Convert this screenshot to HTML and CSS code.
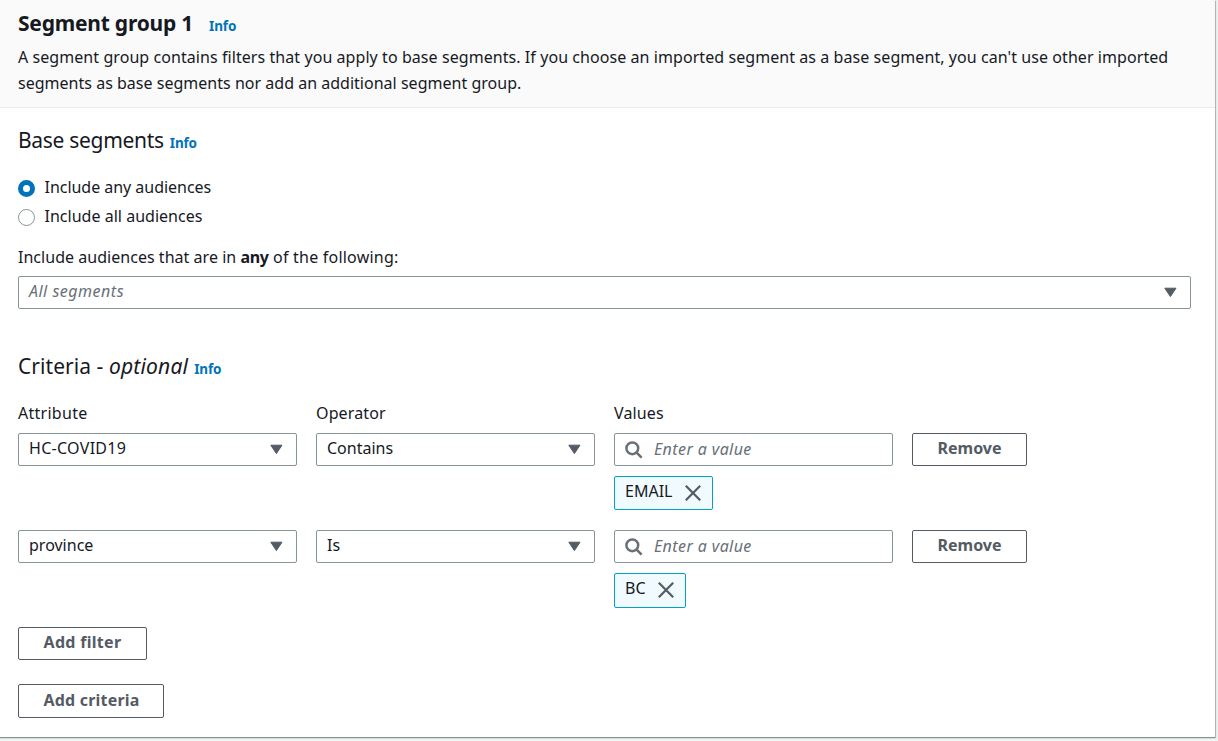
FILE: index.html
```html
<!DOCTYPE html>
<html lang="en">
<head>
<meta charset="utf-8">
<title>Segment group 1</title>
<link rel="stylesheet" href="styles.css">
</head>
<body>
<svg class="defs" width="0" height="0" aria-hidden="true">
  <symbol id="caret" viewBox="0 0 14 11"><path d="M1.8 1.2h11.2L7.4 9.6z" fill="#545b64" stroke="#545b64" stroke-width="1" stroke-linejoin="round"/></symbol>
  <symbol id="search" viewBox="0 0 18 18"><circle cx="7.3" cy="7.3" r="5.9" fill="none" stroke="#687078" stroke-width="2.5"/><path d="M11.6 11.6l5 5" stroke="#687078" stroke-width="2.5"/></symbol>
  <symbol id="close" viewBox="0 0 16 16"><path d="M.8.8l14.4 14.4M15.2.8L.8 15.2" stroke="#545b64" stroke-width="2.2"/></symbol>
</svg>
<main class="panel">
  <header class="panel-header">
    <div class="title-row"><h2 class="title">Segment group 1</h2><a class="info">Info</a></div>
    <p class="description"><span class="line-one">A segment group contains filters that you apply to base segments. If you choose an imported segment as a base segment, you can't use other imported</span> <span class="line-two">segments as base segments nor add an additional segment group.</span></p>
  </header>
  <div class="panel-body">
    <div class="section-row"><h3 class="section-title base-title">Base segments</h3><a class="info">Info</a></div>
    <div class="radios">
      <label class="radio"><span class="dot checked"></span><span class="radio-any">Include any audiences</span></label>
      <label class="radio"><span class="dot"></span><span class="radio-all">Include all audiences</span></label>
    </div>
    <div class="field-label following">Include audiences that are in <b>any</b><span class="following-end"> of the following:</span></div>
    <div class="select"><span class="placeholder all-segments">All segments</span><svg class="caret"><use href="#caret"/></svg></div>
    <div class="section-row criteria-row"><h3 class="section-title criteria-title">Criteria - <i>optional</i></h3><a class="info">Info</a></div>
    <div class="grid labels"><span class="attribute">Attribute</span><span class="operator">Operator</span><span class="values">Values</span></div>
    <div class="grid filter">
      <div class="select"><span class="covid">HC-COVID19</span><svg class="caret"><use href="#caret"/></svg></div>
      <div class="select"><span class="contains">Contains</span><svg class="caret"><use href="#caret"/></svg></div>
      <div class="value-col">
        <div class="input"><svg class="search"><use href="#search"/></svg><span class="placeholder enter">Enter a value</span></div>
        <div class="token"><span class="email">EMAIL</span><svg class="close"><use href="#close"/></svg></div>
      </div>
      <button class="button remove">Remove</button>
    </div>
    <div class="grid filter">
      <div class="select"><span class="province">province</span><svg class="caret"><use href="#caret"/></svg></div>
      <div class="select"><span class="is">Is</span><svg class="caret"><use href="#caret"/></svg></div>
      <div class="value-col">
        <div class="input"><svg class="search"><use href="#search"/></svg><span class="placeholder enter">Enter a value</span></div>
        <div class="token token-bc"><span class="bc">BC</span><svg class="close"><use href="#close"/></svg></div>
      </div>
      <button class="button remove">Remove</button>
    </div>
    <div class="actions">
      <button class="button add-filter">Add filter</button>
      <button class="button add-criteria">Add criteria</button>
    </div>
  </div>
</main>
</body>
</html>
```
FILE: styles.css
```css
* { box-sizing: border-box; }
body {
  margin: 0;
  height: 741px;
  overflow: hidden;
  background: #f2f3f3;
  color: #16191f;
  font: 16px/26px "Noto Sans", "Open Sans", sans-serif;
}
.defs { display: block; }
.panel {
  width: 1215px;
  height: 737px;
  background: #fff;
  box-shadow: 0 1px 1px #879596, 1px 1px 1px #b4bdbd;
}
.panel-header {
  height: 108px;
  padding: 7px 18px 0;
  background: #fafafa;
  border-bottom: 1px solid #eaeded;
}
.title-row, .section-row { display: flex; align-items: baseline; }
.title-row { height: 37px; gap: 16px; line-height: 32px; }
.title { margin: 0; font-size: 21px; font-weight: 700; letter-spacing: -0.22px; }
.info { color: #0073bb; font-size: 13.5px; font-weight: 700; letter-spacing: -0.15px; }
.description { margin: 0; white-space: nowrap; }
.description span { display: block; }
.line-one { letter-spacing: 0.068px; }
.line-two { letter-spacing: 0.016px; }
.panel-body { padding: 16px 24px 0 18px; }
.section-row { gap: 6px; height: 32px; line-height: 32px; }
.section-title { margin: 0; font-size: 21px; font-weight: 400; }
.base-title { letter-spacing: -0.3px; }
.criteria-title { letter-spacing: 0.05px; }
.criteria-title i { letter-spacing: 0.2px; }
.radios { display: grid; gap: 3px; margin-top: 18px; }
.radio { display: flex; align-items: center; gap: 9.5px; height: 26px; }
.dot {
  width: 17px;
  height: 17px;
  margin-top: 2px;
  border: 1px solid #879596;
  border-radius: 50%;
}
.dot.checked { border: 5px solid #0073bb; }
.radio-any { letter-spacing: -0.03px; }
.radio-all { letter-spacing: 0.02px; }
.field-label { margin: 15px 0 6px; }
.following { letter-spacing: 0.03px; }
.following b { letter-spacing: -0.3px; }
.following-end { letter-spacing: 0.22px; }
.select, .input {
  display: flex;
  align-items: center;
  height: 33px;
  padding: 0 13px 0 10px;
  border: 1px solid #879596;
  border-radius: 2px;
}
.select { justify-content: space-between; line-height: 29px; padding-bottom: 2px; }
.input { gap: 11px; padding-bottom: 1px; }
.placeholder { color: #687078; font-style: italic; }
.all-segments { letter-spacing: 0.5px; }
.enter { letter-spacing: 0.4px; }
.covid { letter-spacing: 0.3px; }
.attribute { letter-spacing: 0.27px; }
.operator { letter-spacing: 0.13px; }
.values { letter-spacing: 0.15px; }
.caret { width: 14px; height: 11px; margin-top: 2px; }
.search { width: 18px; height: 18px; margin-top: 1px; }
.close { width: 16px; height: 16px; }
.criteria-row { margin-top: 41px; }
.grid { display: grid; grid-template-columns: 279px 279px 279px 115px; column-gap: 19px; align-items: start; }
.labels { margin: 18px 0 7px; }
.filter { height: 97px; }
.token {
  display: flex;
  align-items: center;
  justify-content: space-between;
  width: 99px;
  height: 34px;
  margin-top: 10px;
  padding: 0 11px 4px 10px;
  border: 1px solid #00a1c9;
  border-radius: 2px;
  background: #f1faff;
}
.token .close { margin-top: 3px; }
.token-bc { width: 72px; height: 35px; padding-bottom: 5px; }
.button {
  height: 33px;
  padding: 0 0 3px;
  border: 1px solid #545b64;
  border-radius: 2px;
  background: #fff;
  color: #545b64;
  font: 700 16px/26px "Noto Sans", "Open Sans", sans-serif;
}
.actions { display: grid; gap: 24px; justify-items: start; }
.add-filter { width: 129px; letter-spacing: 0.3px; }
.add-criteria { width: 146px; height: 34px; padding-left: 1px; letter-spacing: 0.2px; }
```
